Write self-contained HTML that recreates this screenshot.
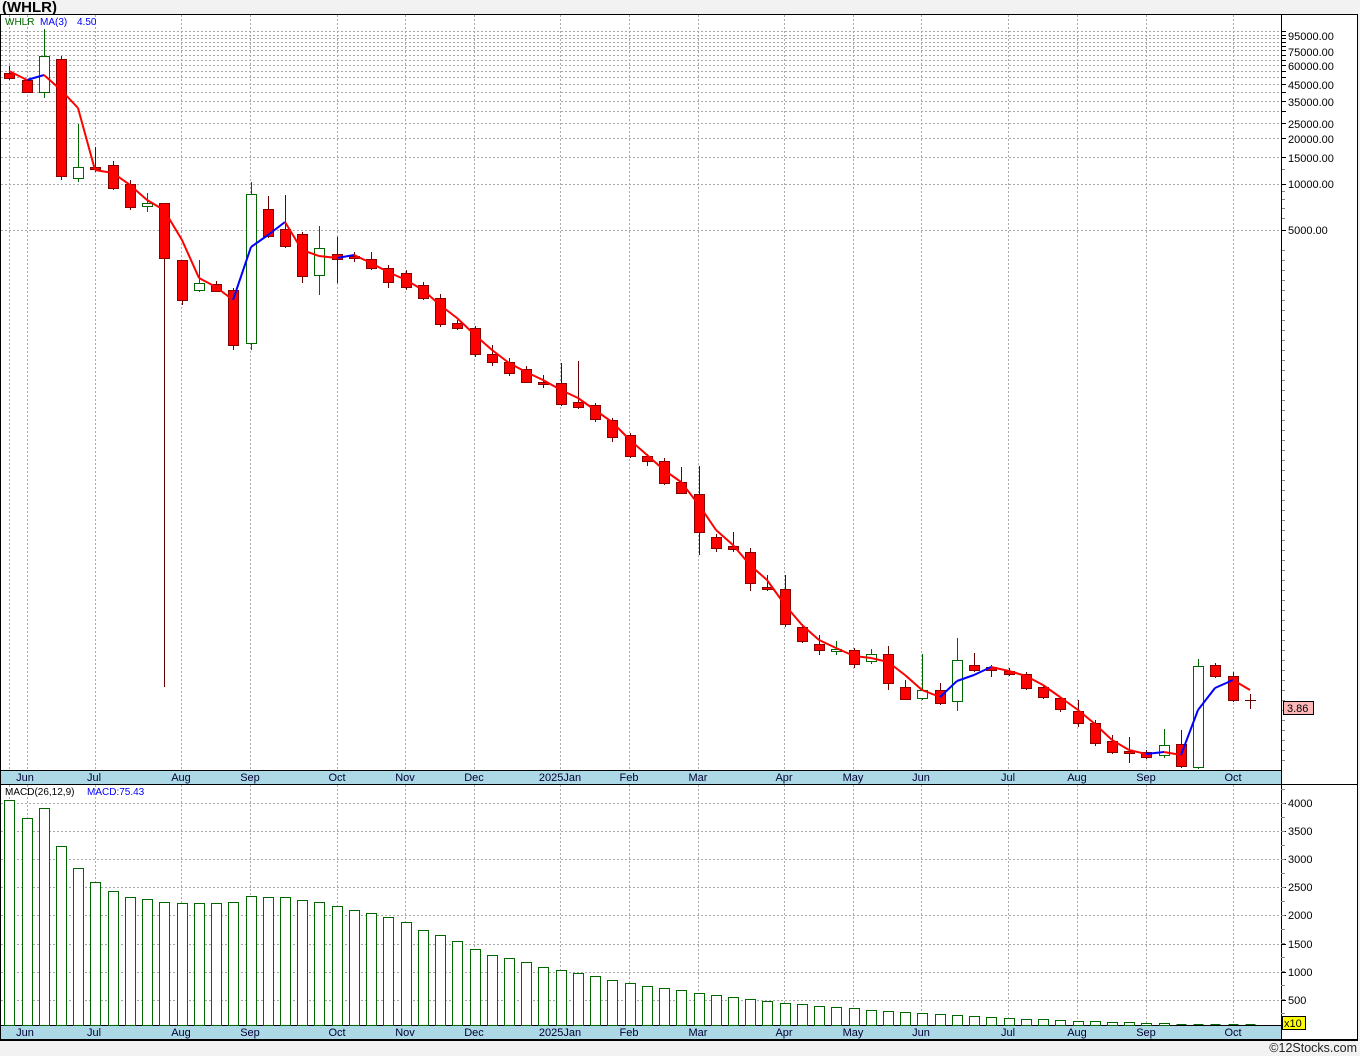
<!DOCTYPE html>
<html><head><meta charset="utf-8"><style>
html,body{margin:0;padding:0;background:#f2f2f2;}
svg{display:block;font-family:"Liberation Sans",sans-serif;}
</style></head><body>
<svg id="s" width="1360" height="1056" xmlns="http://www.w3.org/2000/svg">
<rect x="0" y="0" width="1360" height="1056" fill="#f2f2f2"/>
<text x="2" y="12" font-size="15" font-weight="bold" fill="#000">(WHLR)</text>
<rect x="0.5" y="14.5" width="1357" height="1026" fill="#fff" stroke="#000"/>
<g id="g"></g>
<text x="1357" y="1052" font-size="12.5" text-anchor="end" fill="#222">©12Stocks.com</text>
</svg>
<script>
var g=document.getElementById('g'),h='';
function L(x1,y1,x2,y2,c,w,d){h+='<line x1="'+x1+'" y1="'+y1+'" x2="'+x2+'" y2="'+y2+'" stroke="'+c+'" stroke-width="'+(w||1)+'"'+(d?' stroke-dasharray="'+d+'"':'')+'/>';}
function R(x,y,w,hh,f,s){h+='<rect x="'+x+'" y="'+y+'" width="'+w+'" height="'+hh+'" fill="'+f+'"'+(s?' stroke="'+s+'"':'')+'/>';}
function T(x,y,t,c,sz,a){h+='<text x="'+x+'" y="'+y+'" font-size="'+(sz||11)+'" fill="'+(c||'#000')+'"'+(a?' text-anchor="'+a+'"':'')+'>'+t+'</text>';}
var GC='#a8a8a8',DA='2,2';
function yp(p){return 184-152.8*Math.log10(p/10000);}
var lv=[5000,10000,15000];for(var p=20000;p<=100000;p+=5000)lv.push(p);
lv.forEach(function(p){var y=Math.round(yp(p))+.5;L(1,y,1281,y,GC,1,DA);L(1281,y,1286,y,'#000');});
[6000,7000,8000,9000,12500].forEach(function(p){var y=Math.round(yp(p))+.5;L(1281,y,1285,y,'#888');});
for(var y=250;y<770;y+=10)L(1281,y+.5,1285,y+.5,'#888');
var mx=[9,27,95,181,250,337,405,474,560,629,698,784,853,921,1008,1077,1146,1233];
mx.forEach(function(x){L(x+.5,15,x+.5,770,GC,1,DA);L(x+.5,785,x+.5,1025,GC,1,DA);});
[[95000,36],[75000,52],[60000,66],[45000,85],[35000,102],[25000,124],[20000,139],[15000,158],[10000,184],[5000,230]].forEach(function(a){T(1288,a[1]+4,a[0]+'.00','#000',11);});
var C=[[73,78,'r',66,80],[80,92,'r',80,93],[56,92,'w',29,98],[59,176,'r',56,180],[167,178,'w',124,182],[167,169,'r',147,172],[165,188,'r',161,190],[184,207,'r',180,210],[203,206,'w',193,212],[203,258,'r',203,687],[260,300,'r',260,305],[283,290,'w',260,292],[284,291,'r',281,292],[290,345,'r',288,350],[194,343,'w',182,350],[209,236,'r',196,238],[229,246,'r',195,248],[234,276,'r',232,283],[248,275,'w',226,295],[254,259,'r',237,283],[256,258,'r',252,262],[259,268,'r',252,270],[268,282,'r',265,288],[273,287,'r',270,290],[285,298,'r',282,300],[298,324,'r',294,327],[323,328,'r',320,330],[328,354,'r',326,357],[354,362,'r',345,366],[362,373,'r',358,376],[369,382,'r',366,383],[382,384,'r',375,388],[383,404,'r',363,406],[402,407,'r',361,409],[405,419,'r',403,422],[420,437,'r',418,442],[435,456,'r',433,458],[456,461,'r',454,466],[461,483,'r',458,485],[482,493,'r',467,494],[494,532,'r',466,555],[537,548,'r',534,552],[546,549,'r',532,552],[552,583,'r',548,591],[587,589,'r',575,591],[589,624,'r',575,627],[627,641,'r',624,643],[644,650,'r',635,655],[649,651,'w',641,655],[650,664,'r',648,668],[654,661,'w',649,664],[654,683,'r',646,690],[687,699,'r',680,700],[690,698,'w',654,700],[690,703,'r',683,705],[660,701,'w',638,711],[665,670,'r',653,672],[667,670,'r',665,677],[671,674,'r',668,676],[674,688,'r',672,690],[687,697,'r',685,699],[698,709,'r',697,712],[711,723,'r',700,727],[723,743,'r',720,746],[741,752,'r',735,754],[751,753,'r',737,763],[752,757,'r',750,759],[745,755,'w',729,758],[744,766,'r',730,768],[666,767,'w',659,769],[665,676,'r',663,678],[676,700,'r',672,702],[700,701,'c',694,709]];
function cx(i){return Math.round(9.3+17.23*i);}
C.forEach(function(c,i){var x=cx(i);
 if(c[2]=='c'){L(x+.5,c[3],x+.5,c[4],'#600');L(x-5,c[0]+.5,x+6,c[0]+.5,'#600');return;}
 var wc=c[2]=='r'?'#600':'#060';L(x+.5,c[3],x+.5,c[4],wc);
 var hh=Math.max(c[1]-c[0],2);
 if(c[2]=='r')R(x-4.5,c[0]+.5,10,hh,'#f00','#800');else R(x-4.5,c[0]+.5,10,hh,'#fff','#060');});
var M=[71,80,75,90,108,170,173,185,200,210,240,278,287,300,247,235,222,250,256,258,255,263,272,280,290,305,318,335,350,363,372,380,390,398,410,422,440,455,470,482,505,530,545,565,580,605,625,640,648,656,658,662,675,690,697,681,675,667,671,676,685,697,710,724,740,750,754,752,755,710,688,680,690];
for(var i=0;i<M.length-1;i++){var c=M[i+1]<M[i]?'#00f':'#f00';L(cx(i),M[i],cx(i+1),M[i+1],c,2);}
T(5,25,'WHLR','#060',10);T(40,25,'MA(3)','#00f',10);T(77,25,'4.50','#00f',10);
R(1283.5,701.5,30,13,'#ffb6b6','#000');T(1287,712,'3.86','#000',11);
L(1281.5,15,1281.5,1040,'#000');
function DB(y){R(1,y,1280,14,'#add8e6');L(1,y+.5,1281,y+.5,'#000');L(1,y+14.5,1358,y+14.5,'#000');
 [['Jun',25],['Jul',94],['Aug',181],['Sep',250],['Oct',337],['Nov',405],['Dec',474],['2025Jan',560],['Feb',629],['Mar',698],['Apr',784],['May',853],['Jun',921],['Jul',1008],['Aug',1077],['Sep',1146],['Oct',1233]].forEach(function(a){T(a[1],y+11,a[0],'#000033',11,'middle');});}
DB(770);DB(1025);L(1281,784.5,1358,784.5,'#000');
[[4000,803],[3500,831],[3000,859],[2500,887],[2000,915],[1500,944],[1000,972],[500,1000]].forEach(function(a){L(1,a[1]+.5,1281,a[1]+.5,GC,1,DA);L(1281,a[1]+.5,1286,a[1]+.5,'#000');T(1288,a[1]+4,a[0],'#000',11);});
for(var y=789;y<1025;y+=14)L(1281,y+.5,1285,y+.5,'#888');
T(5,795,'MACD(26,12,9)','#000',10);T(87,795,'MACD:75.43','#00f',10);
var B=[800,818,808,846,868,882,891,897,899,902,903,903,903,902,896,897,897,900,902,906,910,913,917,922,930,935,941,949,955,958,962,967,970,973,976,980,983,986,988,990,993,995,997,999,1001,1003,1004,1006,1007,1008,1010,1011,1012,1013,1014,1015,1016,1017,1018,1019,1019,1020,1021,1021,1022,1022,1023,1023,1024,1024,1024,1024,1024];
B.forEach(function(t,i){var x=cx(i);if(i>=68)R(x-4.5,t,10,1025-t,'#060');else R(x-4.5,t+.5,10,1025-t,'#fff','#060');});
R(1282.5,1016.5,23,13,'#ff0','#000');T(1284,1027,'x10','#000',11);
g.innerHTML=h;
</script>
</body></html>
